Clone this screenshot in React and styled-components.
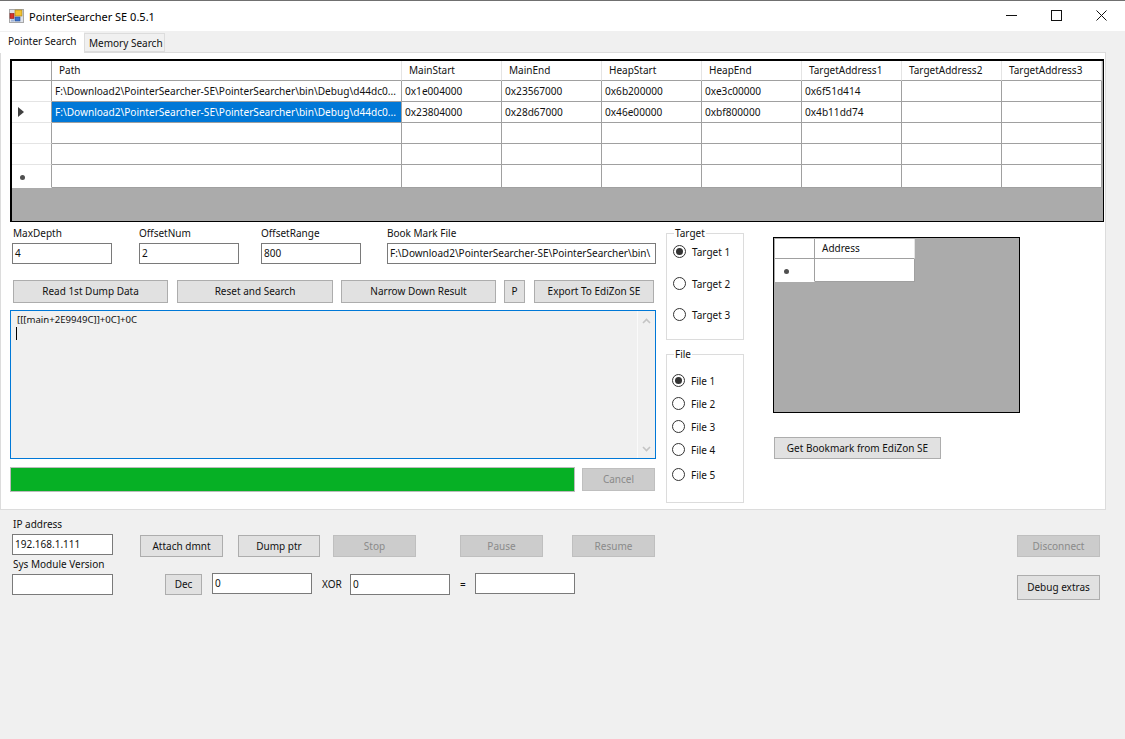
import React from "react";
import styled, { createGlobalStyle } from "styled-components";

const Global = createGlobalStyle`
  html, body { margin: 0; padding: 0; background: #f0f0f0; }
  body { font-family: "Noto Sans", "Open Sans", sans-serif; font-size: 10px; color: #111; }
  * { box-sizing: border-box; }
`;

const Window = styled.div`
  width: 1125px;
  height: 739px;
  overflow: hidden;
  background: #f0f0f0;
  border-top: 1px solid #707070;
`;

const TitleBar = styled.div`
  height: 30px;
  background: #fff;
  display: flex;
  align-items: center;
  padding-left: 9px;
`;

const Title = styled.span`
  margin-left: 5px;
  font-size: 11px;
  color: #000;
`;

const WindowButtons = styled.div`
  margin-left: auto;
  padding-right: 1px;
  display: flex;
  color: #111;
`;

const WindowButton = styled.div`
  width: 45px;
  height: 30px;
  padding-bottom: 1px;
  display: flex;
  align-items: center;
  justify-content: center;
`;

const TabStrip = styled.div`
  height: 21px;
  display: flex;
  align-items: flex-end;
`;

const Tab = styled.div`
  width: ${(p) => p.$w}px;
  height: ${(p) => (p.$active ? "21px" : "19px")};
  padding: ${(p) => (p.$active ? "0 0 3px 8px" : "0 0 0 4px")};
  margin-bottom: ${(p) => (p.$active ? "-1px" : "0")};
  background: ${(p) => (p.$active ? "#fff" : "#f0f0f0")};
  border: ${(p) => (p.$active ? "none" : "1px solid #dcdcdc")};
  display: flex;
  align-items: center;
  position: relative;
  z-index: 1;
`;

const Panel = styled.div`
  width: 1106px;
  height: 458px;
  background: #fff;
  border: 1px solid #dcdcdc;
  padding: 6px 0 0 9px;
`;

const Grid = styled.div`
  width: 1094px;
  height: 163px;
  background: #ababab;
  border: 2px solid #000;
  border-right-width: 1px;
  border-bottom-width: 1px;
  display: grid;
  grid-template-columns: 40px 350px repeat(7, 100px);
  grid-auto-rows: min-content;
`;

const HeadCell = styled.div`
  background: #fff;
  border-right: 1px solid ${(p) => (p.$corner ? "#a0a0a0" : "#e4e4e4")};
  border-bottom: 1px solid #a0a0a0;
  padding: 0 0 2px 7px;
  display: flex;
  align-items: center;
  height: 20px;
  color: #111;
`;

const RowHead = styled.div`
  background: #fff;
  border-right: 1px solid #a0a0a0;
  border-bottom: 1px solid ${(p) => (p.$last ? "#fff" : "#e4e4e4")};
  display: flex;
  align-items: center;
  padding-left: 6px;
  height: ${(p) => (p.$last ? "23px" : "21px")};
`;

const Cell = styled.div`
  background: ${(p) => (p.$selected ? "#0078d7" : "#fff")};
  color: ${(p) => (p.$selected ? "#fff" : "#111")};
  border-right: 1px solid #a0a0a0;
  border-bottom: 1px solid #a0a0a0;
  padding-left: 3px;
  font-size: 10.1px;
  display: flex;
  align-items: center;
  white-space: nowrap;
  overflow: hidden;
  height: ${(p) => (p.$last ? "23px" : "21px")};
`;

const Arrow = styled.span`
  width: 0;
  height: 0;
  border-left: 6px solid #404040;
  border-top: 5px solid transparent;
  border-bottom: 5px solid transparent;
`;

const Star = styled.span`
  width: 5px;
  height: 5px;
  border-radius: 50%;
  background: #505050;
  margin: 3px 0 0 ${(p) => p.$left || 0}px;
`;

const Body = styled.div`
  display: flex;
  margin-top: 5px;
`;

const LeftColumn = styled.div`
  width: 646px;
`;

const FieldRow = styled.div`
  display: flex;
  padding-left: 2px;
`;

const Field = styled.div`
  width: ${(p) => p.$w}px;
  margin-right: ${(p) => p.$gap || 0}px;
  display: flex;
  flex-direction: column;
`;

const Label = styled.label`
  height: 16px;
  line-height: 12px;
  padding-left: ${(p) => p.$pl || 0}px;
  white-space: nowrap;
`;

const Input = styled.div`
  width: ${(p) => p.$w || 100}px;
  height: 21px;
  flex: none;
  margin: ${(p) => p.$mt || 0}px 0 0 ${(p) => p.$ml || 0}px;
  background: #fff;
  border: 1px solid #7a7a7a;
  padding-left: 2px;
  line-height: 18px;
  white-space: nowrap;
  overflow: hidden;
`;

const Button = styled.div`
  width: ${(p) => p.$w}px;
  height: ${(p) => p.$h || 22}px;
  flex: none;
  margin: ${(p) => p.$mt || 0}px 0 0 ${(p) => p.$ml || 0}px;
  padding-bottom: 1px;
  background: ${(p) => (p.$off ? "#cccccc" : "#e1e1e1")};
  color: ${(p) => (p.$off ? "#8a8a8a" : "#111")};
  border: 1px solid ${(p) => (p.$off ? "#bfbfbf" : "#adadad")};
  display: flex;
  align-items: center;
  justify-content: center;
  white-space: nowrap;
`;

const ButtonRow = styled.div`
  display: flex;
  margin-top: 16px;
  padding-left: 3px;
`;

const Log = styled.div`
  margin-top: 7px;
  width: 646px;
  height: 149px;
  background: #f0f0f0;
  border: 1px solid #0078d7;
  display: flex;
`;

const LogText = styled.div`
  flex: 1;
  padding: 2px 6px;
  font-size: 9.6px;
  line-height: 14px;
`;

const Caret = styled.div`
  width: 1px;
  height: 13px;
  margin: 0 0 0 -1px;
  background: #000;
`;

const ScrollTrack = styled.div`
  width: 18px;
  border-left: 1px solid #fafafa;
  display: flex;
  flex-direction: column;
  justify-content: space-between;
  align-items: center;
  padding: 7px 0 6px;
  color: #c4c4c4;
`;

const ProgressRow = styled.div`
  display: flex;
  align-items: center;
  margin-top: 8px;
`;

const Progress = styled.div`
  width: 565px;
  height: 25px;
  background: #06b025;
  border: 1px solid #bcbcbc;
`;

const Groups = styled.div`
  width: 78px;
  margin-left: 10px;
`;

const Group = styled.fieldset`
  width: 78px;
  height: ${(p) => p.$h}px;
  margin: ${(p) => p.$top || 0}px 0 0;
  padding: 0 0 0 ${(p) => p.$pad}px;
  border: 1px solid #dcdcdc;
  min-inline-size: 0;
`;

const Legend = styled.legend`
  padding: 0 1px;
  margin-left: ${(p) => p.$ml}px;
  line-height: 12px;
`;

const Radio = styled.div`
  display: flex;
  align-items: center;
  height: 13px;
  margin-top: ${(p) => p.$top}px;
  gap: 6px;
`;

const RadioMark = styled.span`
  width: 13px;
  height: 13px;
  border: 1px solid #333;
  border-radius: 50%;
  background: #fff;
  display: flex;
  align-items: center;
  justify-content: center;
  &::after {
    content: "";
    width: 7px;
    height: 7px;
    border-radius: 50%;
    background: ${(p) => (p.$on ? "#333" : "transparent")};
  }
`;

const RightColumn = styled.div`
  margin-left: 29px;
  padding-top: 10px;
`;

const AddressGrid = styled.div`
  width: 247px;
  height: 176px;
  background: #ababab;
  border: 1px solid #000;
  padding: 1px;
  display: grid;
  grid-template-columns: 40px 100px;
  grid-auto-rows: min-content;
`;

const Bottom = styled.div`
  padding: 8px 0 0 12px;
`;

const BottomRow = styled.div`
  display: flex;
  margin-top: ${(p) => p.$top || 0}px;
`;

const BottomLabel = styled.span`
  width: ${(p) => p.$w}px;
  flex: none;
  margin: 19px 0 0 ${(p) => p.$ml}px;
  white-space: nowrap;
`;

const FarRight = styled.div`
  margin-left: auto;
  padding-right: 25px;
`;

const AppIcon = () => (
  <svg width="15" height="14" viewBox="0 0 15 14">
    <rect x="0.5" y="0.5" width="14" height="13" fill="#dfe3ea" stroke="#a8a8a8" />
    <rect x="6" y="1" width="7" height="6" fill="#f2c230" stroke="#a07a10" strokeWidth="0.6" />
    <rect x="1" y="4.5" width="4" height="5" fill="#d8322a" stroke="#8a1c16" strokeWidth="0.6" />
    <rect x="6" y="8" width="5" height="4" fill="#3d74d0" stroke="#274c90" strokeWidth="0.6" />
    <rect x="2" y="10.5" width="3" height="2" fill="#9fb4d8" />
  </svg>
);

const columns = ["Path", "MainStart", "MainEnd", "HeapStart", "HeapEnd", "TargetAddress1", "TargetAddress2", "TargetAddress3"];
const pathText = "F:\\Download2\\PointerSearcher-SE\\PointerSearcher\\bin\\Debug\\d44dc0...";
const rows = [
  [pathText, "0x1e004000", "0x23567000", "0x6b200000", "0xe3c00000", "0x6f51d414", "", ""],
  [pathText, "0x23804000", "0x28d67000", "0x46e00000", "0xbf800000", "0x4b11dd74", "", ""],
  ["", "", "", "", "", "", "", ""],
  ["", "", "", "", "", "", "", ""],
  ["", "", "", "", "", "", "", ""],
];

export default function App() {
  return (
    <Window>
      <Global />
      <TitleBar>
        <AppIcon />
        <Title>PointerSearcher SE 0.5.1</Title>
        <WindowButtons>
          <WindowButton>
            <svg width="11" height="11" viewBox="0 0 11 11"><path d="M0 5.5H11" stroke="currentColor" /></svg>
          </WindowButton>
          <WindowButton>
            <svg width="11" height="11" viewBox="0 0 11 11"><rect x="0.5" y="0.5" width="10" height="10" fill="none" stroke="currentColor" /></svg>
          </WindowButton>
          <WindowButton>
            <svg width="11" height="11" viewBox="0 0 11 11"><path d="M0.5 0.5L10.5 10.5M10.5 0.5L0.5 10.5" stroke="currentColor" /></svg>
          </WindowButton>
        </WindowButtons>
      </TitleBar>

      <TabStrip>
        <Tab $active $w={84}>Pointer Search</Tab>
        <Tab $w={81}>Memory Search</Tab>
      </TabStrip>

      <Panel>
        <Grid>
          <HeadCell $corner />
          {columns.map((c) => (
            <HeadCell key={c}>{c}</HeadCell>
          ))}
          {rows.map((row, i) => (
            <React.Fragment key={i}>
              <RowHead $last={i === 4}>
                {i === 1 && <Arrow />}
                {i === 4 && <Star $left={2} />}
              </RowHead>
              {row.map((v, j) => (
                <Cell key={j} $selected={i === 1 && j === 0} $last={i === 4}>{v}</Cell>
              ))}
            </React.Fragment>
          ))}
        </Grid>

        <Body>
          <LeftColumn>
            <FieldRow>
              <Field $w={100} $gap={27}><Label $pl={1}>MaxDepth</Label><Input>4</Input></Field>
              <Field $w={100} $gap={22}><Label>OffsetNum</Label><Input>2</Input></Field>
              <Field $w={100} $gap={26}><Label>OffsetRange</Label><Input>800</Input></Field>
              <Field $w={269}>
                <Label>Book Mark File</Label>
                <Input $w={269}>F:\Download2\PointerSearcher-SE\PointerSearcher\bin\</Input>
              </Field>
            </FieldRow>
            <ButtonRow>
              <Button $w={155} $h={23}>Read 1st Dump Data</Button>
              <Button $w={156} $h={23} $ml={9}>Reset and Search</Button>
              <Button $w={155} $h={23} $ml={8}>Narrow Down Result</Button>
              <Button $w={21} $h={23} $ml={8}>P</Button>
              <Button $w={120} $h={23} $ml={9}>Export To EdiZon SE</Button>
            </ButtonRow>
            <Log>
              <LogText>
                [[[main+2E9949C]]+0C]+0C
                <Caret />
              </LogText>
              <ScrollTrack>
                <svg width="9" height="6" viewBox="0 0 9 6"><path d="M1 5L4.5 1.5L8 5" fill="none" stroke="currentColor" strokeWidth="1.6" /></svg>
                <svg width="9" height="6" viewBox="0 0 9 6"><path d="M1 1L4.5 4.5L8 1" fill="none" stroke="currentColor" strokeWidth="1.6" /></svg>
              </ScrollTrack>
            </Log>
            <ProgressRow>
              <Progress />
              <Button $w={73} $h={23} $ml={7} $off>Cancel</Button>
            </ProgressRow>
          </LeftColumn>

          <Groups>
            <Group $h={113} $pad={6}>
              <Legend $ml={1}>Target</Legend>
              <Radio $top={6}><RadioMark $on />Target 1</Radio>
              <Radio $top={19}><RadioMark />Target 2</Radio>
              <Radio $top={18}><RadioMark />Target 3</Radio>
            </Group>
            <Group $h={155} $top={8} $pad={5}>
              <Legend $ml={2}>File</Legend>
              <Radio $top={14}><RadioMark $on />File 1</Radio>
              <Radio $top={10}><RadioMark />File 2</Radio>
              <Radio $top={10}><RadioMark />File 3</Radio>
              <Radio $top={10}><RadioMark />File 4</Radio>
              <Radio $top={12}><RadioMark />File 5</Radio>
            </Group>
          </Groups>

          <RightColumn>
            <AddressGrid>
              <HeadCell $corner />
              <HeadCell>Address</HeadCell>
              <RowHead $last><Star $left={3} /></RowHead>
              <Cell $last />
            </AddressGrid>
            <Button $w={167} $ml={1} $mt={24}>Get Bookmark from EdiZon SE</Button>
          </RightColumn>
        </Body>
      </Panel>

      <Bottom>
        <BottomRow>
          <Field $w={101}>
            <Label $pl={1}>IP address</Label>
            <Input $w={101}>192.168.1.111</Input>
          </Field>
          <Button $w={83} $ml={27} $mt={17}>Attach dmnt</Button>
          <Button $w={82} $ml={15} $mt={17}>Dump ptr</Button>
          <Button $w={83} $ml={13} $mt={17} $off>Stop</Button>
          <Button $w={83} $ml={44} $mt={17} $off>Pause</Button>
          <Button $w={83} $ml={29} $mt={17} $off>Resume</Button>
          <FarRight>
            <Button $w={83} $mt={17} $off>Disconnect</Button>
          </FarRight>
        </BottomRow>
        <BottomRow $top={1}>
          <Field $w={101}>
            <Label $pl={1}>Sys Module Version</Label>
            <Input $w={101} />
          </Field>
          <Button $w={37} $h={21} $ml={52} $mt={16}>Dec</Button>
          <Input $ml={10} $mt={15}>0</Input>
          <BottomLabel $ml={10} $w={28}>XOR</BottomLabel>
          <Input $mt={16}>0</Input>
          <BottomLabel $ml={10} $w={15}>=</BottomLabel>
          <Input $mt={15} />
          <FarRight>
            <Button $w={83} $h={25} $mt={17}>Debug extras</Button>
          </FarRight>
        </BottomRow>
      </Bottom>
    </Window>
  );
}
